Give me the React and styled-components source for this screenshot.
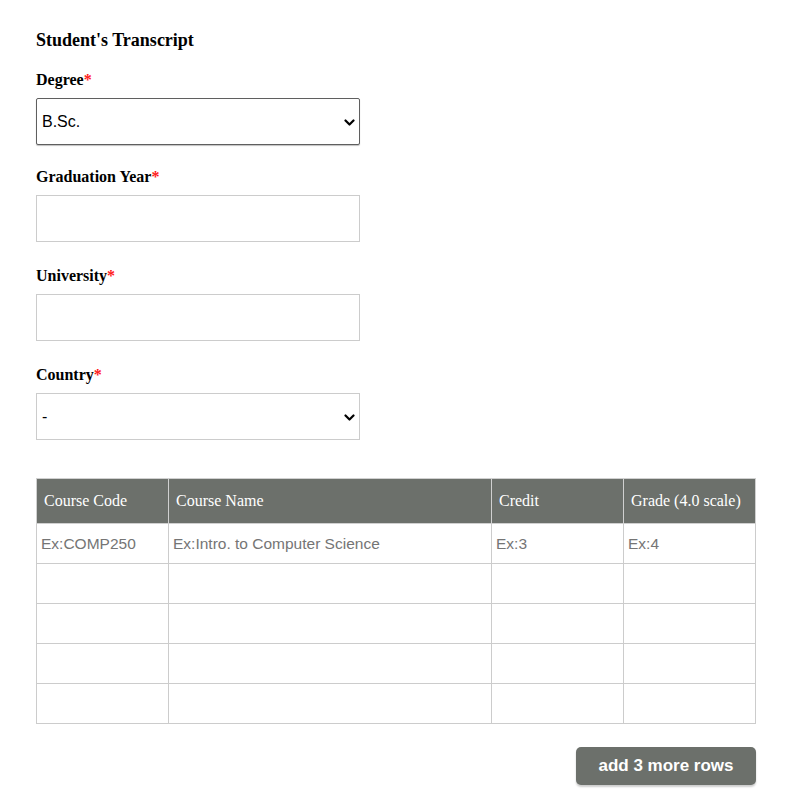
import React from 'react';
import styled, { createGlobalStyle } from 'styled-components';

const GlobalStyle = createGlobalStyle`
  body {
    margin: 0;
    background: #ffffff;
    font-family: "Liberation Serif", "Times New Roman", serif;
    color: #000;
  }
`;

const Page = styled.div`
  width: 720px;
  padding: 31px 0 20px 36px;
`;

const Title = styled.h3`
  margin: 0 0 22px 0;
  font-size: 18px;
  line-height: 18px;
  font-weight: bold;
`;

const Field = styled.div`
  margin-bottom: ${p => p.$gap || 25}px;
  width: 324px;
`;

const Label = styled.label`
  display: block;
  font-size: 16px;
  line-height: 18px;
  font-weight: bold;
  margin-bottom: 9px;
`;

const Required = styled.span`
  color: #ff1a1a;
`;

const TextInput = styled.input`
  box-sizing: border-box;
  width: 324px;
  height: 47px;
  border: 1px solid #cccccc;
  padding: 0 6px;
  font-family: "Liberation Sans", Arial, sans-serif;
  font-size: 16px;
  outline: none;
`;

const SelectWrap = styled.div`
  position: relative;
  width: 324px;
`;

const Select = styled.select`
  display: block;
  box-sizing: border-box;
  appearance: none;
  -webkit-appearance: none;
  width: 324px;
  height: 47px;
  background: #fff;
  border: 1px solid ${p => (p.$focused ? '#5f5f5f' : '#cccccc')};
  border-radius: ${p => (p.$focused ? '2px' : '0')};
  box-shadow: ${p => (p.$focused ? '0 1px 1px rgba(0,0,0,0.25)' : 'none')};
  padding: 0 5px;
  font-family: "Liberation Sans", Arial, sans-serif;
  font-size: 16px;
  color: #000;
  outline: none;
`;

const Chevron = styled.svg`
  position: absolute;
  right: 5px;
  top: 50%;
  width: 11px;
  height: 8px;
  margin-top: -3px;
  pointer-events: none;
`;

const Table = styled.table`
  margin-top: 38px;
  width: 719px;
  border-collapse: collapse;
  table-layout: fixed;
  border: 1px solid #cccccc;
`;

const HeadCell = styled.th`
  background: #6c706b;
  color: #fff;
  font-weight: normal;
  font-size: 16px;
  text-align: left;
  height: 44px;
  padding: 0 7px;
  border: 1px solid #d0d0d0;
  white-space: nowrap;
`;

const Cell = styled.td`
  height: 39px;
  padding: 0;
  border: 1px solid #cccccc;
`;

const CellInput = styled.input`
  box-sizing: border-box;
  width: 100%;
  height: 38px;
  border: none;
  padding: 0 4px;
  font-family: "Liberation Sans", Arial, sans-serif;
  font-size: 15.5px;
  background: transparent;
  outline: none;

  &::placeholder {
    color: #757575;
  }
`;

const Actions = styled.div`
  display: flex;
  justify-content: flex-end;
  width: 720px;
  margin-top: 23px;
`;

const Button = styled.button`
  width: 180px;
  height: 38px;
  border: none;
  border-radius: 5px;
  background: #6c706b;
  color: #fff;
  font-family: "Liberation Sans", Arial, sans-serif;
  font-size: 17px;
  font-weight: bold;
  box-shadow: 0 2px 2px rgba(0, 0, 0, 0.2);
  cursor: pointer;
`;

const DownIcon = () => (
  <Chevron viewBox="0 0 11 8">
    <path d="M1.5 1.5 L5.5 5.5 L9.5 1.5" fill="none" stroke="#000" strokeWidth="2.2" strokeLinecap="round" strokeLinejoin="round" />
  </Chevron>
);

const columns = [
  { title: 'Course Code', width: 132, hint: 'Ex:COMP250' },
  { title: 'Course Name', width: 323, hint: 'Ex:Intro. to Computer Science' },
  { title: 'Credit', width: 132, hint: 'Ex:3' },
  { title: 'Grade (4.0 scale)', width: 132, hint: 'Ex:4' },
];

const rows = [0, 1, 2, 3, 4];

export default function App() {
  return (
    <>
      <GlobalStyle />
      <Page>
        <Title>Student's Transcript</Title>

        <Field $gap={23}>
          <Label>Degree<Required>*</Required></Label>
          <SelectWrap>
            <Select $focused defaultValue="bsc">
              <option value="bsc">B.Sc.</option>
              <option value="msc">M.Sc.</option>
              <option value="phd">Ph.D.</option>
            </Select>
            <DownIcon />
          </SelectWrap>
        </Field>

        <Field>
          <Label>Graduation Year<Required>*</Required></Label>
          <TextInput type="text" />
        </Field>

        <Field>
          <Label>University<Required>*</Required></Label>
          <TextInput type="text" />
        </Field>

        <Field>
          <Label>Country<Required>*</Required></Label>
          <SelectWrap>
            <Select defaultValue="-">
              <option value="-">-</option>
              <option value="ca">Canada</option>
              <option value="us">United States</option>
            </Select>
            <DownIcon />
          </SelectWrap>
        </Field>

        <Table>
          <colgroup>
            {columns.map(c => (
              <col key={c.title} style={{ width: c.width }} />
            ))}
          </colgroup>
          <thead>
            <tr>
              {columns.map(c => (
                <HeadCell key={c.title}>{c.title}</HeadCell>
              ))}
            </tr>
          </thead>
          <tbody>
            {rows.map(r => (
              <tr key={r}>
                {columns.map(c => (
                  <Cell key={c.title}>
                    <CellInput type="text" placeholder={r === 0 ? c.hint : ''} />
                  </Cell>
                ))}
              </tr>
            ))}
          </tbody>
        </Table>

        <Actions>
          <Button type="button">add 3 more rows</Button>
        </Actions>
      </Page>
    </>
  );
}
